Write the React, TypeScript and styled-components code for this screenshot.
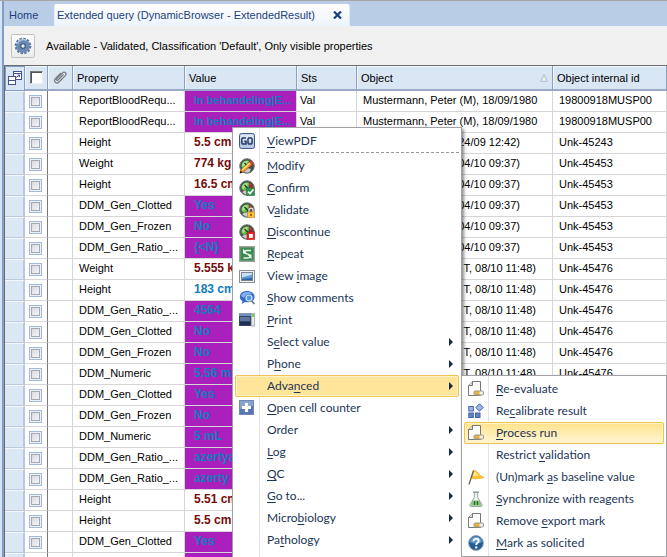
import React from 'react';
import styled, { createGlobalStyle, css } from 'styled-components';

const GlobalStyle = createGlobalStyle`
  * { box-sizing: border-box; }
  html, body { margin: 0; height: 100%; overflow: hidden; }
  #root { height: 100%; }
  body, button, input, table { font-family: "Liberation Sans", Arial, sans-serif; font-size: 11px; color: #000; }
`;

const Window = styled.div`
  position: relative;
  height: 100%;
  overflow: hidden;
  background: #fff;
  border-top: 1px solid #a5a5a5;
  display: flex;
`;
const LeftEdge = styled.div`
  flex: none;
  width: 4px;
  background: #d5e4f4;
  border-right: 2px solid #829cc4;
`;
const Main = styled.main`
  flex: 1;
  min-width: 0;
  display: flex;
  flex-direction: column;
`;
const TabBar = styled.nav`
  flex: none;
  height: 25px;
  display: flex;
  align-items: flex-end;
  background: #b9cde6;
`;
const Tab = styled.button<{ $active?: boolean }>`
  border: 0;
  height: 22px;
  padding: 0 2px 0 5px;
  width: ${p => (p.$active ? '296px' : '50px')};
  text-align: left;
  white-space: nowrap;
  color: #1c3f80;
  background: transparent;
  display: flex;
  align-items: center;
  justify-content: space-between;
  svg { flex: none; }
  ${p => p.$active && css`
    padding: 0 7px 0 2px;
    background: linear-gradient(#ffffff, #ecf4fc);
    border-left: 1px solid #e4eefa;
    border-right: 1px solid #dde9f7;
    border-radius: 2px 2px 0 0;
  `}
`;
const Toolbar = styled.header`
  flex: none;
  height: 39px;
  padding-left: 7px;
  display: flex;
  align-items: center;
  gap: 11px;
  background: #f0f0f0;
  white-space: nowrap;
`;
const GearButton = styled.button`
  width: 24px;
  height: 24px;
  padding: 0;
  display: grid;
  place-items: center;
  border: 1px solid #c3c3c3;
  border-radius: 2px;
  background: linear-gradient(#ffffff, #ebebeb);
`;
const GridFrame = styled.div`
  flex: 1;
  min-height: 0;
  overflow: hidden;
  border-top: 1px solid #6c6c6c;
  border-left: 1px solid #6c6c6c;
`;
const Table = styled.table`
  width: 100%;
  table-layout: fixed;
  border-collapse: separate;
  border-spacing: 0;
`;
const Col = styled.col<{ $w?: number }>`
  ${p => p.$w && css`width: ${p.$w}px;`}
`;
const HeadCell = styled.th<{ $icon?: boolean; $picker?: boolean }>`
  height: 25px;
  padding: ${p => (p.$icon ? '0' : '0 4px')};
  text-align: ${p => (p.$icon ? 'center' : 'left')};
  font-weight: 400;
  white-space: nowrap;
  background: #d9e6f4;
  border-right: 1px solid #8e9fbd;
  border-bottom: 2px solid #9aaac6;
  box-shadow: inset 1px 1px #f2f7fd;
  svg { display: block; margin: 0 auto; }
  ${p => p.$picker && css`
    border: 1px solid #7f9dc8;
    box-shadow: none;
  `}
`;
const SortHead = styled.span`
  display: flex;
  align-items: center;
  justify-content: space-between;
  && svg { margin: 0; }
`;
const Cell = styled.td<{ $tone?: Tone; $pad?: number; $dark?: boolean; $long?: boolean }>`
  height: 21px;
  padding: 0 0 2px ${p => p.$pad ?? 0}px;
  line-height: 18px;
  overflow: hidden;
  white-space: nowrap;
  border-right: 1px solid ${p => (p.$dark ? '#777' : '#d6d6d6')};
  border-bottom: 1px solid #d6d6d6;
  ${p => p.$tone && css`
    font-weight: 700;
    font-size: ${p.$long ? 11 : 12}px;
    color: ${p.$tone === 'red' ? '#760b0b' : '#117bbd'};
    background: ${p.$tone === 'purple' ? '#aa20bd' : '#fff'};
  `}
`;
const Indicator = styled.td`
  height: 21px;
  padding: 0;
  background: #dae7f5;
  border-right: 2px solid #b9c9dd;
  border-bottom: 1px solid #bccadd;
  border-top: 1px solid #f4f8fd;
`;
const CheckCell = styled(Cell)`
  padding: 0 0 0 4px;
`;
const RowCheck = styled.input`
  appearance: none;
  display: block;
  margin: 0;
  width: 13px;
  height: 13px;
  border: 1px solid #a3b9dc;
  background: linear-gradient(135deg, #d4d5d9, #fafafa);
  box-shadow: inset 0 0 0 1px #edf2fa, inset 0 0 0 2px #a5a8b2;
`;
const HeadCheck = styled.input`
  appearance: none;
  display: block;
  margin: 0 auto;
  width: 13px;
  height: 13px;
  background: #fff;
  border: 1px solid #777;
  border-right-color: #eee;
  border-bottom-color: #eee;
  box-shadow: inset 1px 1px #555;
`;
const Stamp = styled.span<{ $wide?: boolean }>`
  display: block;
  width: ${p => (p.$wide ? 173 : 157)}px;
  text-align: right;
`;

const MenuPanel = styled.div`
  position: absolute;
  left: 232px;
  top: 126px;
  bottom: -6px;
  width: 230px;
  padding: 2px;
  border: 1px solid #a0a0a6;
  background: linear-gradient(90deg, #fff 26px, #e2e3e5 26px 27px, #fff 27px);
  background-origin: padding-box;
  box-shadow: 2px 2px 3px rgba(0, 0, 0, .45);
`;
const SubmenuPanel = styled(MenuPanel)`
  left: 461px;
  top: 374px;
  bottom: auto;
  right: 0;
  width: auto;
`;
const Item = styled.button<{ $hot?: 'flat' | 'glow' }>`
  width: 100%;
  height: 22px;
  padding: 0 5px 0 3px;
  border: 1px solid transparent;
  border-radius: 2px;
  background: transparent;
  display: flex;
  align-items: center;
  text-align: left;
  white-space: nowrap;
  font-family: Lato, "Open Sans", sans-serif;
  font-size: 12px;
  line-height: 16px;
  color: #1d3557;
  u { text-underline-offset: 2px; text-decoration-thickness: 1px; }
  ${p => p.$hot && css`
    border-color: #efc44e;
    box-shadow: inset 0 0 0 1px #fff3c8;
    background: ${p.$hot === 'flat' ? '#ffe59a' : 'linear-gradient(#ffe38b, #fff5d4)'};
  `}
`;
const IconSlot = styled.span`
  flex: none;
  width: 16px;
  height: 16px;
  svg { display: block; }
`;
const Label = styled.span`
  flex: 1;
  margin-left: 12px;
`;
const Divider = styled.hr`
  height: 3px;
  margin: 0 0 0 31px;
  border: 0;
  border-top: 1px dashed #999;
`;

type Tone = 'purple' | 'red' | 'blue';

const Svg = ({ children, size = 16 }: { children: React.ReactNode; size?: number }) => (
  <svg width={size} height={size} viewBox="0 0 16 16" aria-hidden="true">{children}</svg>
);
const Gauge = ({ children }: { children?: React.ReactNode }) => (
  <Svg>
    <circle cx="8" cy="8" r="7.300" fill="#454c4d" stroke="#777d7c" />
    <path d="M2.500 9A5.700 5.700 0 0 1 10 2.700L9.500 8 5 11z" fill="#63c643" />
    <path d="M3 7A5 5 0 0 1 8.500 3v2.500L4 9z" fill="#c3eea8" opacity=".7" />
    <path d="M10.500 2.700A6 6 0 0 1 14 8l-3 .5z" fill="#9a2b28" />
    <path d="M11 3.200l1.600 1.400-1 1.200-1.400-1z" fill="#ec3835" />
    <path d="M5.500 5l4 4" stroke="#26302f" strokeWidth="1.200" />
    <path d="M3 12q4-3 9-1l-1.500 3Q7 16 3 12z" fill="#c8cbca" />
    {children}
  </Svg>
);
const PageIcon = () => (
  <Svg>
    <path d="M4.500 .5h8v14h-12v-10z" fill="#fcfcfc" stroke="#777" />
    <path d="M4.500 .5v4h-4" fill="#ddd" stroke="#777" />
    <rect x="6" y="10" width="9.500" height="4" rx="1" fill="#eee" stroke="#9b9b9b" />
    <rect x="7" y="10.700" width="4" height="2.600" fill="#f2b735" stroke="#c98d1b" strokeWidth=".6" />
  </Svg>
);
const icons: Record<string, React.ReactNode> = {
  go: (
    <Svg>
      <rect x=".5" y=".5" width="15" height="15" rx="2" fill="#b8c9e2" stroke="#415987" />
      <rect x="1.500" y="1.500" width="13" height="7" rx="1" fill="#e2eaf5" opacity=".8" />
      <path d="M7 5H3.500L2.800 6v4l.7 1H7V8.200H5.200M9.700 5h2.600l.8 1v4l-.8 1H9.700L9 10V6z" fill="none" stroke="#283c6b" strokeWidth="1.500" />
    </Svg>
  ),
  modify: (
    <Gauge>
      <path d="M1 15l1-3.500L10.500 4l2.500 2.500L4.500 14z" fill="#f49a28" stroke="#8d4a10" strokeWidth=".6" />
      <path d="M2.700 11.500L10.600 4.400l.8.800-8 7.300z" fill="#ffe4a4" />
      <path d="M10.500 4L12 2.600 14.500 5 13 6.500z" fill="#df3a2d" />
      <path d="M.6 15.500l1-3 2 2z" fill="#251b16" />
    </Gauge>
  ),
  confirm: (
    <Gauge>
      <rect x="7.500" y="8" width="8.200" height="7.800" rx="1" fill="#37914e" stroke="#287a3d" strokeWidth=".6" />
      <path d="M9 11.600l2 2 3.400-4" fill="none" stroke="#fff" strokeWidth="1.600" />
    </Gauge>
  ),
  validate: (
    <Gauge>
      <path d="M10 11V8.300a2 2 0 0 1 4 0V11" fill="none" stroke="#ddd" strokeWidth="1.400" />
      <rect x="8.700" y="10" width="6.800" height="5.700" fill="#ffc53d" stroke="#bd851b" strokeWidth=".7" />
      <path d="M12 11.700v2.200" stroke="#704b0b" strokeWidth="1.400" />
    </Gauge>
  ),
  stop: (
    <Gauge>
      <rect x="8" y="8" width="7.800" height="7.800" rx="1" fill="#db2b2b" stroke="#a91a1a" strokeWidth=".6" />
      <rect x="10" y="10" width="3.800" height="3.800" fill="#fff" />
    </Gauge>
  ),
  repeat: (
    <Svg>
      <rect x=".7" y=".7" width="14.600" height="14.600" fill="#3d8a50" stroke="#9ba39d" strokeWidth="1.400" />
      <path d="M12 4.500H7.500C5 4.500 5 7 7 7.600l2.500.8c2.500.8 2 3.600-.5 3.600H4.500" fill="none" stroke="#e9f6eb" strokeWidth="1.500" />
      <path d="M4 2.500v5h4z M12.500 13.500v-5H8.500z" fill="#e9f6eb" />
    </Svg>
  ),
  image: (
    <Svg>
      <rect x=".5" y="2.500" width="15" height="12" fill="#f3f3f3" stroke="#8b8f95" />
      <rect x="2.500" y="4.500" width="11" height="8" fill="#5f97d8" stroke="#7c858f" />
      <path d="M3 5h10v1.800L3 9.600z" fill="#c6e0f8" />
      <path d="M3 12h10v-2L3 11z" fill="#2e62a8" />
    </Svg>
  ),
  comments: (
    <Svg>
      <path d="M2.500 14l1-3C-.5 9 0 3 5 1.500c6-1.500 11 1.300 10.500 6C15 12 9 13 6 12z" fill="#3668c8" />
      <path d="M2 6c1-4 8-5.500 12-2-4-1-8 0-9 4z" fill="#86b1f1" />
      <circle cx="10" cy="8" r="3" fill="#4f9ae6" stroke="#dfe9f5" strokeWidth="1.200" />
      <path d="M12.300 10.500l3.200 3.500" stroke="#6d7988" strokeWidth="1.800" />
    </Svg>
  ),
  print: (
    <Svg>
      <rect x="0" y="1.500" width="12" height="12.500" fill="#33476d" />
      <rect x="0" y="1.500" width="12" height="2.500" fill="#7290bf" />
      <path d="M1 6h10M1 8h10" stroke="#89a4cf" />
      <rect x="1" y="10" width="10" height="3" fill="#1f3050" />
      <rect x="12.500" y="1.500" width="3" height="12.500" fill="#e8eaec" stroke="#9ca2a9" strokeWidth=".8" />
      <rect x="13" y="2" width="2" height="3" fill="#77d34c" />
    </Svg>
  ),
  plus: (
    <Svg>
      <rect x=".5" y=".5" width="14" height="14" fill="#5577b5" stroke="#7088b2" />
      <path d="M1 1h13v5L1 9z" fill="#87a1d1" />
      <path d="M7.500 3v9M3 7.500h9" stroke="#fff" strokeWidth="3.200" />
    </Svg>
  ),
  page: <PageIcon />,
  blocks: (
    <Svg>
      <g stroke="#4263a5" fill="#9db7e7">
        <rect x=".8" y="3.500" width="4.500" height="4.500" />
        <rect x=".8" y="10" width="4.500" height="4.500" fill="#6385c6" />
        <rect x="7.500" y="10" width="4.500" height="4.500" fill="#6385c6" />
        <path d="M11.500.8l3.700 3.700-3.700 3.700-3.700-3.700z" />
      </g>
    </Svg>
  ),
  flag: (
    <Svg>
      <path d="M5.500 1.500C8 1 9.500 3 11 5c1 1.500 2.500 2 5 3.500-4 2-6 .5-8 1.500l-4.500-.5z" fill="#f8c230" stroke="#e5a51e" strokeWidth=".5" />
      <path d="M5.800 2.500C8 2.500 9 5 10.500 7L5 7z" fill="#ffe586" />
      <path d="M5.500 1.500L1 15.500" stroke="#665b45" strokeWidth="1.200" />
    </Svg>
  ),
  flask: (
    <Svg>
      <path d="M6.300 1.500v5L1.700 14q0 1.500 1.500 1.500h9.600q1.500 0 1.500-1.500L9.700 6.500v-5" fill="#eef2ef" stroke="#9aa49d" />
      <path d="M4.500 9.500h7l2 4.300q0 1-1 1H3.500q-1 0-1-1z" fill="#8cc77c" />
      <path d="M6.500 10v4M9.500 10v4" stroke="#276d31" strokeWidth="1.400" />
      <path d="M5 1.200h6" stroke="#8f9992" strokeWidth="1.500" />
    </Svg>
  ),
  help: (
    <Svg>
      <circle cx="8" cy="8" r="7.400" fill="#235d94" stroke="#8ba3ba" />
      <path d="M2 7a6 5.500 0 0 1 12 0Q8 10 2 7z" fill="#5d9aca" />
      <path d="M5.500 6.200c0-3.300 5.200-3 5.200-.2C10.700 8 8.200 7.700 8.200 10" fill="none" stroke="#fff" strokeWidth="1.900" />
      <circle cx="8.200" cy="12.400" r="1.200" fill="#fff" />
    </Svg>
  ),
};

interface Entry { label: string; accessKey: string; icon?: string; arrow?: boolean; hot?: 'flat' | 'glow' }

const menu: Entry[] = [
  { label: 'Modify', accessKey: 'M', icon: 'modify' },
  { label: 'Confirm', accessKey: 'C', icon: 'confirm' },
  { label: 'Validate', accessKey: 'a', icon: 'validate' },
  { label: 'Discontinue', accessKey: 'D', icon: 'stop' },
  { label: 'Repeat', accessKey: 'R', icon: 'repeat' },
  { label: 'View image', accessKey: 'im', icon: 'image' },
  { label: 'Show comments', accessKey: 'S', icon: 'comments' },
  { label: 'Print', accessKey: 'P', icon: 'print' },
  { label: 'Select value', accessKey: 'e', arrow: true },
  { label: 'Phone', accessKey: 'h', arrow: true },
  { label: 'Advanced', accessKey: 'n', arrow: true, hot: 'flat' },
  { label: 'Open cell counter', accessKey: 'O', icon: 'plus' },
  { label: 'Order', accessKey: '', arrow: true },
  { label: 'Log', accessKey: 'L', arrow: true },
  { label: 'QC', accessKey: 'Q', arrow: true },
  { label: 'Go to...', accessKey: 'G', arrow: true },
  { label: 'Microbiology', accessKey: 'b', arrow: true },
  { label: 'Pathology', accessKey: 't', arrow: true },
];
const submenu: Entry[] = [
  { label: 'Re-evaluate', accessKey: 'R', icon: 'page' },
  { label: 'Recalibrate result', accessKey: 'c', icon: 'blocks' },
  { label: 'Process run', accessKey: 'P', icon: 'page', hot: 'glow' },
  { label: 'Restrict validation', accessKey: 'v' },
  { label: '(Un)mark as baseline value', accessKey: 'as', icon: 'flag' },
  { label: 'Synchronize with reagents', accessKey: 'S', icon: 'flask' },
  { label: 'Remove export mark', accessKey: 'ex', icon: 'page' },
  { label: 'Mark as solicited', accessKey: 'M', icon: 'help' },
];

/* Underlines the first letter of the place in the label where `accessKey` occurs. */
const Mnemonic = ({ text, accessKey }: { text: string; accessKey: string }) => {
  const at = accessKey ? text.indexOf(accessKey) : -1;
  if (at < 0) return <>{text}</>;
  return <>{text.slice(0, at)}<u>{text[at]}</u>{text.slice(at + 1)}</>;
};
const MenuEntry = ({ label, accessKey, icon, arrow, hot }: Entry) => (
  <Item role="menuitem" $hot={hot} aria-haspopup={arrow ? 'menu' : undefined}>
    <IconSlot>{icon && icons[icon]}</IconSlot>
    <Label><Mnemonic text={label} accessKey={accessKey} /></Label>
    {arrow && <svg width="4" height="8" viewBox="0 0 4 8"><path d="M0 0l4 4-4 4z" fill="#16294a" /></svg>}
  </Item>
);

type Row = [string, string, Tone, string, string];
const T1 = '04/10 09:37)';
const T2 = 'T, 08/10 11:48)';
const rows: Row[] = [
  ['ReportBloodRequ...', 'In behandeling|E...', 'purple', 'Mustermann, Peter (M), 18/09/1980', '19800918MUSP00'],
  ['ReportBloodRequ...', 'In behandeling|E...', 'purple', 'Mustermann, Peter (M), 18/09/1980', '19800918MUSP00'],
  ['Height', '5.5 cm', 'red', '24/09 12:42)', 'Unk-45243'],
  ['Weight', '774 kg', 'red', T1, 'Unk-45453'],
  ['Height', '16.5 cm', 'red', T1, 'Unk-45453'],
  ['DDM_Gen_Clotted', 'Yes', 'purple', T1, 'Unk-45453'],
  ['DDM_Gen_Frozen', 'No', 'purple', T1, 'Unk-45453'],
  ['DDM_Gen_Ratio_...', '{<N}', 'purple', T1, 'Unk-45453'],
  ['Weight', '5.555 kg', 'red', T2, 'Unk-45476'],
  ['Height', '183 cm', 'blue', T2, 'Unk-45476'],
  ['DDM_Gen_Ratio_...', '4564', 'purple', T2, 'Unk-45476'],
  ['DDM_Gen_Clotted', 'No', 'purple', T2, 'Unk-45476'],
  ['DDM_Gen_Frozen', 'No', 'purple', T2, 'Unk-45476'],
  ['DDM_Numeric', '5.56 mL', 'purple', T2, 'Unk-45476'],
  ['DDM_Gen_Clotted', 'Yes', 'purple', '', ''],
  ['DDM_Gen_Frozen', 'No', 'purple', '', ''],
  ['DDM_Numeric', '5 mL', 'purple', '', ''],
  ['DDM_Gen_Ratio_...', 'azertya', 'purple', '', ''],
  ['DDM_Gen_Ratio_...', 'azerty', 'purple', '', ''],
  ['Height', '5.51 cm', 'red', '', ''],
  ['Height', '5.5 cm', 'red', '', ''],
  ['DDM_Gen_Clotted', 'Yes', 'purple', '', ''],
  ['', '', 'purple', '', ''],
];

const Gear = () => (
  <Svg size={18}>
    <circle cx="8" cy="8" r="6.300" fill="none" stroke="#58749c" strokeWidth="2.200" strokeDasharray="2.100 1.200" />
    <circle cx="8" cy="8" r="4.400" fill="#5f80ae" stroke="#6a89b5" strokeWidth="3.400" />
    <path d="M3 6a5.500 5.500 0 0 1 8-3" fill="none" stroke="#adc3de" strokeWidth="1.500" />
    <circle cx="8" cy="8" r="2" fill="#f1f3f6" stroke="#3b567e" />
  </Svg>
);

export default function App() {
  return (
    <Window>
      <GlobalStyle />
      <LeftEdge />
      <Main>
        <TabBar>
          <Tab>Home</Tab>
          <Tab $active>
            Extended query (DynamicBrowser - ExtendedResult)
            <svg width="9" height="8" viewBox="0 0 9 8"><path d="M1 .5l7 7M8 .5l-7 7" stroke="#173f83" strokeWidth="2.200" /></svg>
          </Tab>
        </TabBar>
        <Toolbar>
          <GearButton aria-label="Settings"><Gear /></GearButton>
          <span>Available - Validated, Classification 'Default', Only visible properties</span>
        </Toolbar>
        <GridFrame>
          <Table>
            <colgroup>
              <Col $w={20} /><Col $w={23} /><Col $w={25} /><Col $w={112} /><Col $w={112} /><Col $w={60} /><Col $w={196} /><Col />
            </colgroup>
            <thead>
              <tr>
                <HeadCell $icon $picker>
                  <svg width="15" height="15" viewBox="0 0 15 15">
                    <g fill="#fff" stroke="#46528c">
                      <rect x="5.500" y=".5" width="8" height="8" />
                      <path d="M5.500 2.500h8" />
                      <rect x=".5" y="5.500" width="7" height="4" />
                      <rect x=".5" y="9.500" width="7" height="4" />
                      <path d="M8 6.500l3-2M9.500 4h2v2" fill="none" />
                    </g>
                  </svg>
                </HeadCell>
                <HeadCell $icon><HeadCheck type="checkbox" aria-label="Select all" /></HeadCell>
                <HeadCell $icon>
                  <svg width="15" height="15" viewBox="0 0 15 15">
                    <path d="M10.500 4.500L5 10c-1 1-2.200-.2-1.300-1.200L9.500 3C11.500 1 14.300 3.500 12.300 5.700L6 12c-2.600 2.500-6-.7-3.500-3.500L8 3" fill="none" stroke="#777c82" strokeWidth="1.200" />
                  </svg>
                </HeadCell>
                <HeadCell>Property</HeadCell>
                <HeadCell>Value</HeadCell>
                <HeadCell>Sts</HeadCell>
                <HeadCell>
                  <SortHead>
                    Object
                    <svg width="8" height="8" viewBox="0 0 8 8"><path d="M4 .8L.8 7.300h6.400z" fill="#eaf1f9" stroke="#a2afc0" strokeWidth=".8" /></svg>
                  </SortHead>
                </HeadCell>
                <HeadCell>Object internal id</HeadCell>
              </tr>
            </thead>
            <tbody>
              {rows.map(([prop, value, tone, obj, id], i) => (
                <tr key={i}>
                  <Indicator />
                  <CheckCell $dark><RowCheck type="checkbox" aria-label={`Select row ${i + 1}`} /></CheckCell>
                  <Cell />
                  <Cell $pad={6}>{prop}</Cell>
                  <Cell $pad={9} $tone={tone} $long={value.length > 12}>{value}</Cell>
                  <Cell $pad={3}>{i < 2 ? 'Val' : ''}</Cell>
                  <Cell $pad={6}>{i < 2 ? obj : <Stamp $wide={obj === T2}>{obj}</Stamp>}</Cell>
                  <Cell $pad={6}>{id}</Cell>
                </tr>
              ))}
            </tbody>
          </Table>
        </GridFrame>
      </Main>
      <MenuPanel role="menu">
        <MenuEntry label="ViewPDF" accessKey="V" icon="go" />
        <Divider />
        {menu.map(m => <MenuEntry key={m.label} {...m} />)}
      </MenuPanel>
      <SubmenuPanel role="menu">
        {submenu.map(m => <MenuEntry key={m.label} {...m} />)}
      </SubmenuPanel>
    </Window>
  );
}
